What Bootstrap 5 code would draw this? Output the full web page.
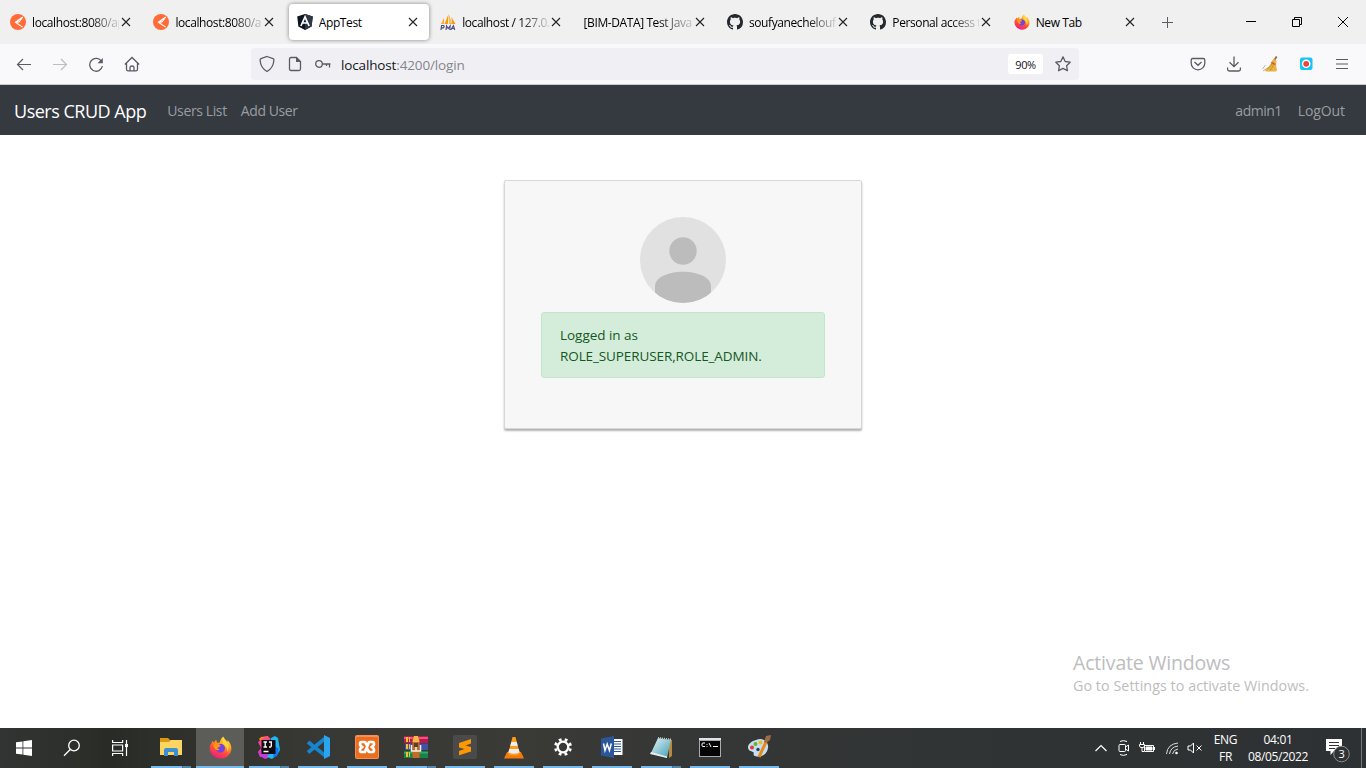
<!DOCTYPE html>
<html lang="en">
<head>
<meta charset="utf-8">
<meta name="viewport" content="width=device-width, initial-scale=1">
<title>AppTest</title>
<link href="https://cdn.jsdelivr.net/npm/bootstrap@5.3.0/dist/css/bootstrap.min.css" rel="stylesheet">
<style>
body{font-family:"Open Sans","Noto Sans",sans-serif;width:1366px;height:768px;overflow:hidden;background:#fff;color:#000}
svg{display:block;flex:none}
.tabstrip{height:44px;background:#f0f0f0;padding-left:2px}
.btab{width:143.4px;height:44px;padding:4px 3px 4px 0}
.btab-in{height:36px;width:140px;padding:0 11px 0 8px;border-radius:4px;font-size:12px;letter-spacing:-.4px}
.btab-in.on{background:#fff;box-shadow:0 0 4px rgba(0,0,0,.45)}
.btab-label{width:87px;margin-left:6px;overflow:hidden;white-space:nowrap;line-height:18px;padding-top:1px}
.btab-label.fade-end{-webkit-mask-image:linear-gradient(90deg,#000 66%,rgba(0,0,0,.12));mask-image:linear-gradient(90deg,#000 66%,rgba(0,0,0,.12))}
.btab-label.wide{width:110px;margin-left:0}
.plus{margin-left:8px}
.win{width:46px;height:44px}
.toolbar{height:41px;background:#f9f9fb;border-bottom:1px solid #ccc;padding-left:6px;padding-right:6px}
.tb{width:36px;height:40px;color:#5b5b66}
.urlbar{width:828px;height:32px;background:#f0f0f4;border-radius:4px;margin-left:101px;padding-left:2px;color:#5b5b66}
.ub{width:28px}
.url{font-size:13.5px;letter-spacing:-.14px;color:#85858c;margin-left:4px;line-height:20px;padding-top:2px}
.url b{font-weight:400;color:#15141a}
.zoomlvl{width:35px;height:20px;border-radius:3px;background:#fff;color:#15141a;font-size:11px;letter-spacing:-.35px;line-height:22px}
.bookmark{margin:0 8px 0 12px}
.appnav{height:50px;background:#343a40;padding:2px 21px 0 14px;font-size:14px}
.appnav .navbar-brand{font-size:18px;letter-spacing:-.49px;line-height:27px;color:#fff;margin:0 21px 0 0;padding:0}
.appnav .nav-link{color:#9a9da0;padding:0;line-height:22px;letter-spacing:-.38px}
.appnav .n2{margin-left:14px;letter-spacing:-.4px}
.appnav .n3{letter-spacing:-.5px}.appnav .n4{letter-spacing:-.1px}
.page{height:593px;padding-top:45px}
.login-card{width:358px;height:249px;background:#f7f7f7;border:1px solid #d7d7d7;border-radius:2px;box-shadow:0 2px 2px rgba(0,0,0,.3);padding:36px}
.role-note{width:284px;height:66px;margin:9px 0 0 0;padding:12px 18px 10px;font-size:13.5px;line-height:21px;color:#155724;background:#d4edda;border:1px solid #c3e6cb;border-radius:3px}
.l1{letter-spacing:-.03px}.l2{letter-spacing:-.1px}
.watermark{left:1073px;top:650px;color:#bdbdbd;white-space:nowrap}
.wm1{font-size:19.5px;line-height:25px;letter-spacing:-.18px}.wm2{font-size:14.3px;line-height:21px;letter-spacing:.05px}
.taskbar{height:40px;background:linear-gradient(90deg,#323433 0,#292c26 110px,#30312d 190px,#373833 300px,#3a3a36 520px,#353736 700px,#303334 1000px,#2e3133 1366px);color:#fff;font-size:12px}
.tk{width:48px;height:40px}
.app{width:48px;height:40px;margin-right:1px;border-bottom:2px solid transparent;position:relative}
.app:nth-child(4){margin-left:3px}
.app::after{content:"";position:absolute;left:4px;width:40px;height:2px;bottom:-2px;background:#76b9ed}
.app.multi::after{background:linear-gradient(90deg,#76b9ed 31px,#3c5c74 31px,#5587ab 32px)}
.app.current{background:#5c5c59}
.app.current::after{left:0;width:48px}
.tray{letter-spacing:-.35px;line-height:17px}
.tr{width:23.6px}
.lang{width:35px;margin-left:1px}
.clock{width:70px}
.notes{margin-left:9px}
.peek{width:5px;height:40px;margin-left:11px;border-left:1px solid #777}
</style>
</head>
<body class="d-flex flex-column">
<svg width="0" height="0" class="position-absolute">
<defs>
<linearGradient id="fx" x1=".8" y1="0" x2=".3" y2="1"><stop offset="0" stop-color="#fff44f"/><stop offset=".35" stop-color="#ffa51f"/><stop offset=".65" stop-color="#ff4b3a"/><stop offset="1" stop-color="#e81e82"/></linearGradient>
<linearGradient id="np" x1="0" y1="0" x2="1" y2="1"><stop offset="0" stop-color="#e4f5f7"/><stop offset="1" stop-color="#3f9cb3"/></linearGradient>
<symbol id="x" viewBox="0 0 10 10"><path d="M1 1l8 8M9 1L1 9" stroke="#222" stroke-width="1.1"/></symbol>
<symbol id="postman" viewBox="0 0 16 16"><circle cx="8" cy="8" r="8" fill="#ff6c37"/><path d="M12.8 3L5.4 8.2l7.2 4.9M5.4 8.2L9 8l3.8-5" fill="none" stroke="#fff" stroke-width="1.1"/><path d="M5 8.2l3-2.2 1 2.2z" fill="#fff"/></symbol>
<symbol id="github" viewBox="0 0 16 16"><path fill="#24292f" d="M8 0C3.58 0 0 3.58 0 8c0 3.54 2.29 6.53 5.47 7.59.4.07.55-.17.55-.38 0-.19-.01-.82-.01-1.49-2.01.37-2.53-.49-2.69-.94-.09-.23-.48-.94-.82-1.13-.28-.15-.68-.52-.01-.53.63-.01 1.08.58 1.23.82.72 1.21 1.87.87 2.33.66.07-.52.28-.87.51-1.07-1.78-.2-3.64-.89-3.64-3.95 0-.87.31-1.59.82-2.15-.08-.2-.36-1.02.08-2.12 0 0 .67-.21 2.2.82.64-.18 1.32-.27 2-.27s1.36.09 2 .27c1.53-1.04 2.2-.82 2.2-.82.44 1.1.16 1.92.08 2.12.51.56.82 1.27.82 2.15 0 3.07-1.87 3.75-3.65 3.95.29.25.54.73.54 1.48 0 1.07-.01 1.93-.01 2.2 0 .21.15.46.55.38A8 8 0 0 0 16 8c0-4.42-3.58-8-8-8"/></symbol>
<symbol id="firefox" viewBox="0 0 24 24"><path fill="url(#fx)" d="M3.2 5.3l2 1.500L7.400 4l1 3 2.800-.2C12 3 14 1.300 15 .5c.5 2.500 3 3.500 4 5.500l.6-1.600C22 7 23.500 10 23.300 13.500 22.800 19.500 18 23.500 12.300 23.500 5.700 23.500.7 18.600.7 12.500c0-2.500 1-4 2-5z"/><path fill="#7542e5" d="M7.500 10.500c2-2.500 7-3 8.500 0 2 4-1 7-4.500 6.800-3-.1-5-2.500-4.800-5z"/><path fill="#ff980e" d="M4.500 10c1-2 3-2.500 4.500-2l3 1.800c-.5 1.700-2.500 1.800-3.300 2.800.5 1 1.500 1 2.300 1-1 2-3.500 1.700-4.800-.2C5.500 12.500 5 11 4.500 10z"/><path fill="#ffde44" d="M15 2c.3 2.500 4.500 4 5.300 8 .5 3-.3 5-1.300 6.500 0-4-1-6-3.500-7.500C13.500 7.500 13.500 4 15 2z" opacity=".85"/></symbol>
</defs></svg>

<!-- tab strip -->
<div class="tabstrip d-flex align-items-center">
<div class="btab"><div class="btab-in d-flex align-items-center"><svg width="16" height="16"><use href="#postman"/></svg><span class="btab-label fade-end">localhost:8080/ap</span><svg class="ms-auto" width="10" height="10"><use href="#x"/></svg></div></div>
<div class="btab"><div class="btab-in d-flex align-items-center"><svg width="16" height="16"><use href="#postman"/></svg><span class="btab-label fade-end">localhost:8080/ap</span><svg class="ms-auto" width="10" height="10"><use href="#x"/></svg></div></div>
<div class="btab"><div class="btab-in on d-flex align-items-center"><svg width="16" height="16" viewBox="0 0 16 16"><path fill="#0d1420" d="M8 0l7.800 2.600-1.200 10L8 16l-6.600-3.400-1.200-10z"/><path fill="#303844" d="M8 0l7.800 2.600-1.200 10L8 16z"/><path fill="none" stroke="#fff" stroke-width="1.700" d="M3.900 12L8 2.800 12.100 12M5.500 9h5"/></svg><span class="btab-label">AppTest</span><svg class="ms-auto" width="10" height="10"><use href="#x"/></svg></div></div>
<div class="btab"><div class="btab-in d-flex align-items-center"><svg width="16" height="16" viewBox="0 0 16 16"><path fill="#f89c0e" d="M1 10l3-6v6zM4.500 10l4-10-.5 10zM9 10V1l3 9zM12 10l-.5-7 4 7z"/><path fill="#fbc16b" d="M1 9.500l2.500-3v3zM9 3l3 6.500H9z"/><path fill="none" stroke="#4d4f86" stroke-width="1.200" d="M1 16l.6-4.500h2q1.200 1.200-.4 2.400H1.500M6 16l.6-4 1.600 2.500 1.900-2.500-.3 4M10.800 16l2.600-4.300L14.700 16M11.800 14.500H14"/></svg><span class="btab-label fade-end">localhost / 127.0.</span><svg class="ms-auto" width="10" height="10"><use href="#x"/></svg></div></div>
<div class="btab"><div class="btab-in d-flex align-items-center"><span class="btab-label wide fade-end">[BIM-DATA] Test Java</span><svg class="ms-auto" width="10" height="10"><use href="#x"/></svg></div></div>
<div class="btab"><div class="btab-in d-flex align-items-center"><svg width="16" height="16"><use href="#github"/></svg><span class="btab-label fade-end">soufyanechelouf</span><svg class="ms-auto" width="10" height="10"><use href="#x"/></svg></div></div>
<div class="btab"><div class="btab-in d-flex align-items-center"><svg width="16" height="16"><use href="#github"/></svg><span class="btab-label fade-end">Personal access t</span><svg class="ms-auto" width="10" height="10"><use href="#x"/></svg></div></div>
<div class="btab"><div class="btab-in d-flex align-items-center"><svg width="16" height="16"><use href="#firefox"/></svg><span class="btab-label">New Tab</span><svg class="ms-auto" width="10" height="10"><use href="#x"/></svg></div></div>
<svg class="plus" width="20" height="20" viewBox="0 0 20 20"><path d="M10.500 5v11M5 10.500h11" stroke="#5b5b66"/></svg>
<div class="d-flex ms-auto">
<div class="win d-flex align-items-center justify-content-center"><svg width="12" height="12"><path d="M1 5.500h10" stroke="#000"/></svg></div>
<div class="win d-flex align-items-center justify-content-center"><svg width="12" height="12" fill="none" stroke="#000"><path d="M1.500 3.500h7v7h-7zM3.500 3.500v-2h7v7h-2"/></svg></div>
<div class="win d-flex align-items-center justify-content-center"><svg width="12" height="12"><path d="M1 1l10 10M11 1L1 11" stroke="#000"/></svg></div>
</div>
</div>

<!-- browser toolbar -->
<div class="toolbar d-flex align-items-center">
<div class="tb d-flex align-items-center justify-content-center"><svg width="16" height="16" fill="none" stroke="#5b5b66" stroke-width="1.200"><path d="M15 8.500H1.500M7 3L1.500 8.500 7 14"/></svg></div>
<div class="tb d-flex align-items-center justify-content-center"><svg width="16" height="16" fill="none" stroke="#bcbcc2" stroke-width="1.200"><path d="M1 8.500h13.500M9 3l5.500 5.500L9 14"/></svg></div>
<div class="tb d-flex align-items-center justify-content-center"><svg width="16" height="16" fill="none" stroke="#5b5b66" stroke-width="1.300"><path d="M13.600 5.500A6.400 6.400 0 1 0 14.400 10"/><path d="M14.800 2v5.300H9.500z" fill="#5b5b66" stroke="none"/></svg></div>
<div class="tb d-flex align-items-center justify-content-center"><svg width="16" height="16" fill="none" stroke="#5b5b66" stroke-width="1.300"><path d="M.8 8.500L8 1.500l7.200 7M2.500 7v6.200q0 1.600 1.600 1.600h7.800q1.600 0 1.600-1.600V7M6 14.500v-3q0-1.500 2-1.500t2 1.500v3"/></svg></div>
<div class="urlbar d-flex align-items-center">
<div class="ub d-flex justify-content-center"><svg width="16" height="18" fill="none" stroke="#5b5b66" stroke-width="1.300"><path d="M8 1.500l6 2.200q1 .4.900 1.600C14.500 11 12.500 14 8 16.500 3.500 14 1.500 11 1.100 5.300 1 4.100 2 3.700 2 3.700z"/></svg></div>
<div class="ub d-flex justify-content-center"><svg width="14" height="16" fill="none" stroke="#5b5b66" stroke-width="1.300"><path d="M3 1.500h5.500L12.500 5.500V13q0 1.500-1.500 1.500H3Q1.500 14.500 1.500 13V3Q1.500 1.500 3 1.500z"/><path d="M8 1v5h5z" fill="#5b5b66" stroke="none"/></svg></div>
<div class="ub d-flex justify-content-center"><svg width="16" height="12" fill="none" stroke="#5b5b66" stroke-width="1.300"><circle cx="4" cy="6" r="3.300"/><path d="M7.300 6H15.500M14.500 6v3.500M11.500 6v2"/></svg></div>
<span class="url"><b>localhost</b>:4200/login</span>
<span class="zoomlvl ms-auto text-center">90%</span>
<svg class="bookmark" width="16" height="16" fill="none" stroke="#5b5b66" stroke-width="1.300" stroke-linejoin="round"><path d="M8 .9l2.200 4.600 5 .7-3.600 3.500.8 5L8 12.400l-4.400 2.300.8-5L.8 6.200l5-.7z"/></svg>
</div>
<div class="d-flex ms-auto">
<div class="tb d-flex align-items-center justify-content-center"><svg width="16" height="16" fill="none" stroke="#5b5b66" stroke-width="1.300"><path d="M2.700 2.500h10.600q1.500 0 1.500 1.500v3.300a6.800 6.500 0 0 1-13.600 0V4q0-1.500 1.500-1.500zM4.500 6L8 9.300 11.500 6"/></svg></div>
<div class="tb d-flex align-items-center justify-content-center"><svg width="16" height="18" fill="none" stroke="#5b5b66" stroke-width="1.300"><path d="M8 1.500v10M3.500 7.200L8 11.700l4.500-4.500M1.600 12.500v1.800q0 1.700 1.700 1.700h9.400q1.700 0 1.700-1.700v-1.800"/></svg></div>
<div class="tb d-flex align-items-center justify-content-center"><svg width="16" height="16"><path d="M14.700.5L12 4.500" stroke="#9b6a2a" stroke-width="1.800"/><path fill="#e8b244" d="M12.500 3l2 2q-1 4 .5 9l-1 1.500H4l-1.500-2Q9 10 10 4.500z"/><path d="M5 13q4-2 6-7M8 14.500q3-3 4-8" stroke="#c9912f" fill="none"/><path fill="#d9473f" d="M9.500 6l4 2-.5 1-4-2z"/><path d="M.5 13l3-4M1 15l3-2" stroke="#b8b8a8"/></svg></div>
<div class="tb d-flex align-items-center justify-content-center"><svg width="14" height="14"><rect x="1" y=".5" width="12.500" height="12.500" rx="2" fill="#15c5f5"/><circle cx="7.200" cy="6.800" r="4.300" fill="#fff"/><circle cx="7.200" cy="6.800" r="2.900" fill="#f04438"/></svg></div>
<div class="tb d-flex align-items-center justify-content-center"><svg width="14" height="12" stroke="#5b5b66" stroke-width="1.200"><path d="M1 1.500h12M1 6h12M1 10.500h12"/></svg></div>
</div>
</div>

<!-- application -->
<nav class="appnav d-flex align-items-center">
<a class="navbar-brand">Users CRUD App</a>
<div class="d-flex flex-grow-1"><a class="nav-link n1">Users List</a><a class="nav-link n2">Add User</a><a class="nav-link ms-auto n3">admin1</a><a class="nav-link ms-3 n4">LogOut</a></div>
</nav>
<main class="page d-flex justify-content-center align-items-start">
<div class="login-card d-flex flex-column align-items-center">
<svg width="86" height="86" viewBox="0 0 86 86"><clipPath id="cp"><circle cx="43" cy="43" r="43"/></clipPath><g clip-path="url(#cp)"><rect width="86" height="86" fill="#e1e1e1"/><circle cx="43" cy="34" r="13.700" fill="#bcbcbc"/><path fill="#bcbcbc" d="M15 86V69C15 60 29 54.700 43 54.700S71 60 71 69v17z"/></g></svg>
<div class="alert role-note"><span class="l1">Logged in as</span><br><span class="l2">ROLE_SUPERUSER,ROLE_ADMIN.</span></div>
</div>
</main>
<div class="watermark position-absolute"><div class="wm1">Activate Windows</div><div class="wm2">Go to Settings to activate Windows.</div></div>

<!-- taskbar -->
<footer class="taskbar d-flex align-items-center">
<div class="tk d-flex align-items-center justify-content-center"><svg width="16" height="16" fill="#fff"><path d="M0 2.300L6.500 1.400v6.200H0zM7.300 1.300L16 0v7.600H7.300zM0 8.400h6.500v6.200L0 13.700zM7.300 8.400H16V16l-8.700-1.300z"/></svg></div>
<div class="tk d-flex align-items-center justify-content-center"><svg width="18" height="18" fill="none" stroke="#fff" stroke-width="1.300"><circle cx="11" cy="6.500" r="5.300"/><path d="M7.200 10.500L1 16.800"/></svg></div>
<div class="tk d-flex align-items-center justify-content-center"><svg width="16" height="16" fill="none" stroke="#fff" stroke-width="1.200"><path d="M.6 0v2.500h10V0M.6 16v-2.500h10V16M.6 5h10v6H.6zM14.500 0v16"/><path d="M13 4h3v3h-3z" fill="#fff" stroke="none"/></svg></div>
<div class="app multi d-flex align-items-center justify-content-center"><svg width="22" height="20"><path fill="#d99a10" d="M0 1h8l2 2h11v4H0z"/><path fill="#fcd462" d="M0 5h9l2-2h11v15H0z"/><path fill="#3c8fd0" d="M4 19v-6q0-2 2-2h10q2 0 2 2v6h-4v-4H8v4z"/></svg></div>
<div class="app current d-flex align-items-center justify-content-center"><svg width="23" height="23"><use href="#firefox"/></svg></div>
<div class="app multi d-flex align-items-center justify-content-center"><svg width="24" height="24"><path fill="#fc801d" d="M2 4l2-2 7-1 2 4-8 4z"/><path fill="#f8469b" d="M10 1l4 3-7 3-3 8 3 6-4 1-2-5 3-4-3-6z"/><path fill="#c93bd8" d="M1 17l5-2 5 4v4l-3 1-5-3z"/><path fill="#21b7f4" d="M14 3l4-2 3 2 1 6 1 6-3 5-5 4-5-2 2-4z"/><path fill="#087cfa" d="M18 11l4 3-2 7-4 1z"/><path fill="#120b10" d="M4.500 5h14v14h-14z"/><path d="M6.500 7h3.500M8.200 7v5M6.500 12H10M12 7h3M14.300 7v4q0 1-1 1H12M6.500 16.500h5" fill="none" stroke="#fff" stroke-width="1.300"/></svg></div>
<div class="app d-flex align-items-center justify-content-center"><svg width="24" height="24"><path fill="none" stroke="#1684ce" stroke-width="3.800" d="M19 3.500L2 17.500M2 7L19 20.500"/><path fill="#2aa4ee" d="M18 0l6 3v18l-6 3z"/></svg></div>
<div class="app d-flex align-items-center justify-content-center"><svg width="24" height="24"><rect width="24" height="24" rx="2" fill="#f59058"/><rect x="1" y="2" width="22" height="21" rx="1" fill="#ea6e1e"/><path fill="none" stroke="#fff" stroke-width="2.700" stroke-linejoin="round" stroke-linecap="round" d="M12 10.500L10 7H6.500Q5 7 5 9t2.500 3Q5 13 5 15t1.500 2H10l4-10h3.500Q19 7 19 9t-2.500 3Q19 13 19 15t-1.500 2H14l-2-3.500"/></svg></div>
<div class="app multi d-flex align-items-center justify-content-center"><svg width="24" height="22"><path fill="#be174d" d="M0 0h24v7H0z"/><path fill="#e25a84" d="M0 1h24v2H0z"/><path fill="#4350a5" d="M1 7.500h23v6.500H1z"/><path fill="#17834a" d="M0 15h24v7H0z"/><path fill="#3ba768" d="M0 16h24v1.500H0z"/><path fill="#f1c12f" d="M2 1h2v5H2zM2 8h2v5H2zM2 16h2v5H2zM5 1h1v5H5zM5 8h1v5H5zM5 16h1v5H5z"/><path fill="#c76a24" d="M8.500 1h7v21h-7z"/><path fill="#f8b64f" d="M10 0h4l1.500 6h-7z"/><path fill="none" stroke="#f3f3e8" stroke-width="1.500" d="M7.500 9v6h9V9M12 10v5"/><path fill="#584026" d="M10 7h4v4h-4z"/></svg></div>
<div class="app d-flex align-items-center justify-content-center"><svg width="24" height="24"><rect width="24" height="24" rx="2" fill="#4a4a4a"/><path fill="#ff9800" d="M6 8l12-4v4.500L12.500 10.500 18 12v4.500L6 20.300V16l5.500-2L6 12.500z"/></svg></div>
<div class="app d-flex align-items-center justify-content-center"><svg width="20" height="23"><path fill="#f47b0b" d="M3 16h14l3 6.500H0z"/><path fill="#ff9b18" d="M8.500 1h3L16 18q-6 3-12 0z"/><path fill="#eee" d="M7.300 6h5.400l1 4H6.300zM5.300 13h9.400l1 3.500q-5.700 2.500-11.400 0z"/></svg></div>
<div class="app d-flex align-items-center justify-content-center"><svg width="18" height="18" fill="none" stroke="#fff"><circle cx="9" cy="9" r="5.300" stroke-width="2.300"/><circle cx="9" cy="9" r="7.600" stroke-width="2.800" stroke-dasharray="2.800 3.169" stroke-dashoffset="-1.500"/></svg></div>
<div class="app d-flex align-items-center justify-content-center"><svg width="22" height="22"><path fill="#fff" d="M11 3h10.500v16H11z"/><path d="M13 5.500h7M13 8h7M13 10.500h7M13 13h7M13 15.500h7" stroke="#2b579a"/><path fill="#2b579a" d="M0 2.500L13 0v22L0 19.500z"/><path fill="none" stroke="#fff" stroke-width="1.500" d="M2.500 7.500l1.500 7 2.200-6.500 2.200 6.500 1.900-7"/></svg></div>
<div class="app multi d-flex align-items-center justify-content-center"><svg width="23" height="23"><path fill="#ba883d" d="M19 3l3 1v16l-3 2z"/><path fill="url(#np)" d="M8 2l13 2-4 18L1 17z"/><path fill="#e9eff0" d="M1 16l16 4.500V22L0 18z"/><path stroke="#b9c7c9" stroke-width="2" stroke-dasharray="1 1" d="M8 2l13 1.500"/></svg></div>
<div class="app d-flex align-items-center justify-content-center"><svg width="22" height="19"><path fill="#a8acb0" d="M0 0h22v19H0z"/><path fill="#dde4e8" d="M0 0h22v2H0z"/><path fill="#050505" d="M1 3h20v15H1z"/><path d="M6 5H4q-1 0-1 1v1.500q0 1 1 1h2M8 6v.8M8 8v.8M10 5l2 4M14 8.500h5" stroke="#fff" fill="none"/></svg></div>
<div class="app d-flex align-items-center justify-content-center"><svg width="24" height="24"><path fill="#c4dff2" d="M9 5C16 2 22 7 21 13c-1 7-8 10-13 8-3-1 0-3-2-4s-5-1-5-5c0-3 4-6 8-7z"/><circle cx="5" cy="12.500" r="2" fill="#e03c2e"/><circle cx="8.500" cy="9" r="2" fill="#65b32e"/><circle cx="13.500" cy="7.500" r="2" fill="#f2b722"/><circle cx="11" cy="14.500" r="1.700" fill="#263e58"/><path d="M12 22l7-15" stroke="#e98719" stroke-width="3"/><path fill="#9d6b45" d="M17 7l2-6 5-1-1 5-4 3z"/></svg></div>

<div class="tray d-flex align-items-center ms-auto">
<div class="tr d-flex justify-content-center"><svg width="14" height="10" fill="none" stroke="#fff" stroke-width="1.200"><path d="M1.500 8L7 2.500 12.500 8"/></svg></div>
<div class="tr d-flex justify-content-center"><svg width="12" height="18" fill="none" stroke="#fff"><rect x="1" y="5.500" width="6.500" height="7" rx="1"/><path d="M7.500 8l3-2v6l-3-2M2 2.500q3-1.800 7 0M2 15.500q3 1.800 7 0"/></svg></div>
<div class="tr d-flex justify-content-center"><svg width="18" height="14" fill="none" stroke="#fff"><path d="M5.500 4.500h9v6h-9zM15.500 6v3M1.500 1v3M4.500 1v3M.5 3.500h5v1.500l-1 1.500h-3L.5 5zM3 6.500v4h2"/><path d="M7 6h6v3H7z" fill="#fff"/></svg></div>
<div class="tr d-flex justify-content-center"><svg width="14" height="14" fill="none" stroke="#ddd"><path d="M1.500 13Q2.500 3 13 2M4.500 13Q5.500 6 13 5M7.500 13q1-4.500 5.500-5"/><circle cx="11.500" cy="12" r="1.300" fill="#fff" stroke="none"/></svg></div>
<div class="tr d-flex justify-content-center"><svg width="16" height="14" fill="none" stroke="#fff"><path d="M1 5h2.500L6.500 2v10L3.500 9H1zM9.500 4.500l5 5M14.500 4.500l-5 5"/></svg></div>
<div class="lang text-center">ENG<br>FR</div>
<div class="clock text-center">04:01<br>08/05/2022</div>
<svg class="notes" width="28" height="30"><path fill="#fff" d="M4 6h16v12H12l-3.500 4v-4H4z"/><path d="M7 9.500h10M7 12.500h10M7 15.500h6" stroke="#333"/><circle cx="19.500" cy="21" r="7.800" fill="#303334" stroke="#8a8c8d"/><text x="19.500" y="25" text-anchor="middle" font-size="11" fill="#fff">3</text></svg>
<div class="peek"></div>
</div>
</footer>
<script src="https://cdn.jsdelivr.net/npm/bootstrap@5.3.0/dist/js/bootstrap.bundle.min.js"></script>
</body>
</html>
